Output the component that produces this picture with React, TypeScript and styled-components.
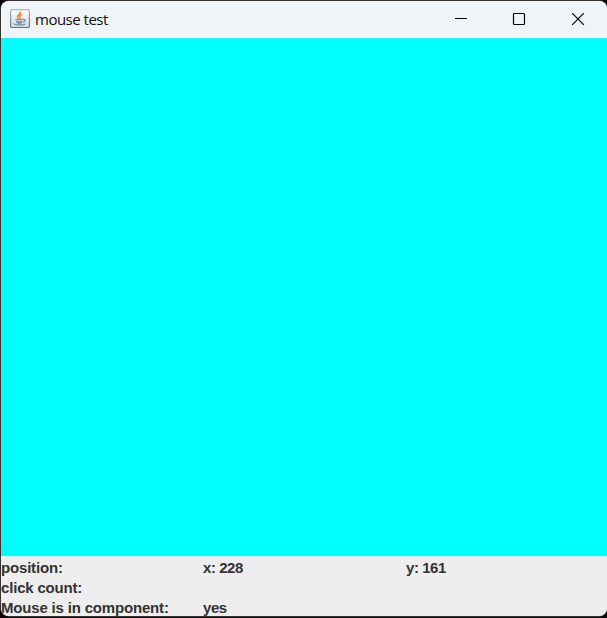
import React from "react";
import styled, { createGlobalStyle } from "styled-components";

const GlobalStyle = createGlobalStyle`
  html, body {
    margin: 0;
    background: #080606;
    overflow: hidden;
  }
`;

const Desktop = styled.div`
  box-sizing: border-box;
  width: 607px;
  height: 618px;
  padding: 1px 0 2px 1px;
  background: #080606;
`;

const Window = styled.div`
  display: flex;
  flex-direction: column;
  height: 615px;
  overflow: hidden;
  border-radius: 8px;
  background: #eeeeee;
  box-shadow: 0 0 0 1px #383434;
`;

const TitleBar = styled.header`
  display: flex;
  align-items: center;
  flex: 0 0 37px;
  box-sizing: border-box;
  padding: 0 0 1px 9px;
  background: #eff4f9;
`;

const AppIcon = styled.svg`
  display: block;
  flex: none;
  width: 20px;
  height: 20px;
`;

const Title = styled.h1`
  flex: 1;
  margin: 0 0 1px 5px;
  font: 400 15px/20px "Open Sans", sans-serif;
  letter-spacing: -0.5px;
  color: #111;
`;

const ControlButton = styled.button<{ $width: number }>`
  display: flex;
  align-items: center;
  justify-content: center;
  width: ${({ $width }) => $width}px;
  height: 36px;
  padding: 0;
  border: 0;
  background: transparent;
  color: #000;
`;

const Glyph = styled.svg`
  display: block;
  width: 14px;
  height: 14px;
  fill: none;
  stroke: currentColor;
  stroke-width: 1.2;
`;

const Canvas = styled.main`
  flex: 0 0 518px;
  background: #00ffff;
`;

const StatusGrid = styled.footer`
  display: grid;
  grid-template-columns: 202px 203px 201px;
  grid-template-rows: repeat(3, 20px);
  height: 60px;
  background: #eeeeee;
`;

const Label = styled.span<{ $value: boolean }>`
  padding-top: 2px;
  font: 700 15px/20px "Liberation Sans", Arial, sans-serif;
  letter-spacing: ${({ $value }) => ($value ? "-0.45px" : "-0.18px")};
  color: #333333;
  white-space: nowrap;
`;

const rows = [
  ["position:", "x: 228", "y: 161"],
  ["click count:", "", ""],
  ["Mouse is in component:", "yes", ""],
];

function JavaIcon() {
  return (
    <AppIcon viewBox="0 0 20 20">
      <defs>
        <linearGradient id="tile" x1="0" y1="0" x2="0" y2="1">
          <stop offset="0" stopColor="#fdfdfd" />
          <stop offset="1" stopColor="#d5dade" />
        </linearGradient>
        <linearGradient id="rim" x1="0" y1="0" x2="0" y2="1">
          <stop offset="0" stopColor="#a9b4bb" />
          <stop offset="1" stopColor="#58778c" />
        </linearGradient>
      </defs>
      <rect x="0.6" y="0.6" width="18.8" height="17.9" rx="1.6" fill="url(#tile)" stroke="url(#rim)" strokeWidth="1.2" />
      <path d="M10.2 2.8C11 5 7.2 5.8 7.4 7.6C7.5 8.7 8.5 9 9 9.8M12 5.2C9.8 6 9.1 7 10 8C10.5 8.7 10.2 9.2 9.7 9.8" fill="none" stroke="#e58c45" strokeWidth="1.7" />
      <path d="M5.5 10.7H12.5M6 12.4C7.5 13 11 12.9 12.3 12.4M6.8 13.6C8.3 14.3 10.5 14.2 11.8 13.6M12.8 10.5C15.8 10 15.3 12.8 12.8 13.2M4.5 14.6C2.8 16.1 14 16.7 15 14.8" fill="none" stroke="#6c8ea8" strokeWidth="1.3" />
    </AppIcon>
  );
}

export default function App() {
  return (
    <>
      <GlobalStyle />
      <Desktop>
        <Window>
          <TitleBar>
            <JavaIcon />
            <Title>mouse test</Title>
            <ControlButton $width={58} aria-label="Minimize">
              <Glyph viewBox="0 0 14 14"><path d="M1 6.5H13" strokeWidth="1" /></Glyph>
            </ControlButton>
            <ControlButton $width={58} aria-label="Maximize">
              <Glyph viewBox="0 0 14 14"><rect x="1.5" y="1.5" width="11" height="11" rx="1" /></Glyph>
            </ControlButton>
            <ControlButton $width={59} aria-label="Close">
              <Glyph viewBox="0 0 14 14"><path d="M1.2 1.2L12.8 12.8M12.8 1.2L1.2 12.8" /></Glyph>
            </ControlButton>
          </TitleBar>
          <Canvas />
          <StatusGrid>
            {rows.flatMap((row, r) =>
              row.map((text, c) => (
                <Label key={`${r}-${c}`} $value={c > 0}>{text}</Label>
              )),
            )}
          </StatusGrid>
        </Window>
      </Desktop>
    </>
  );
}
